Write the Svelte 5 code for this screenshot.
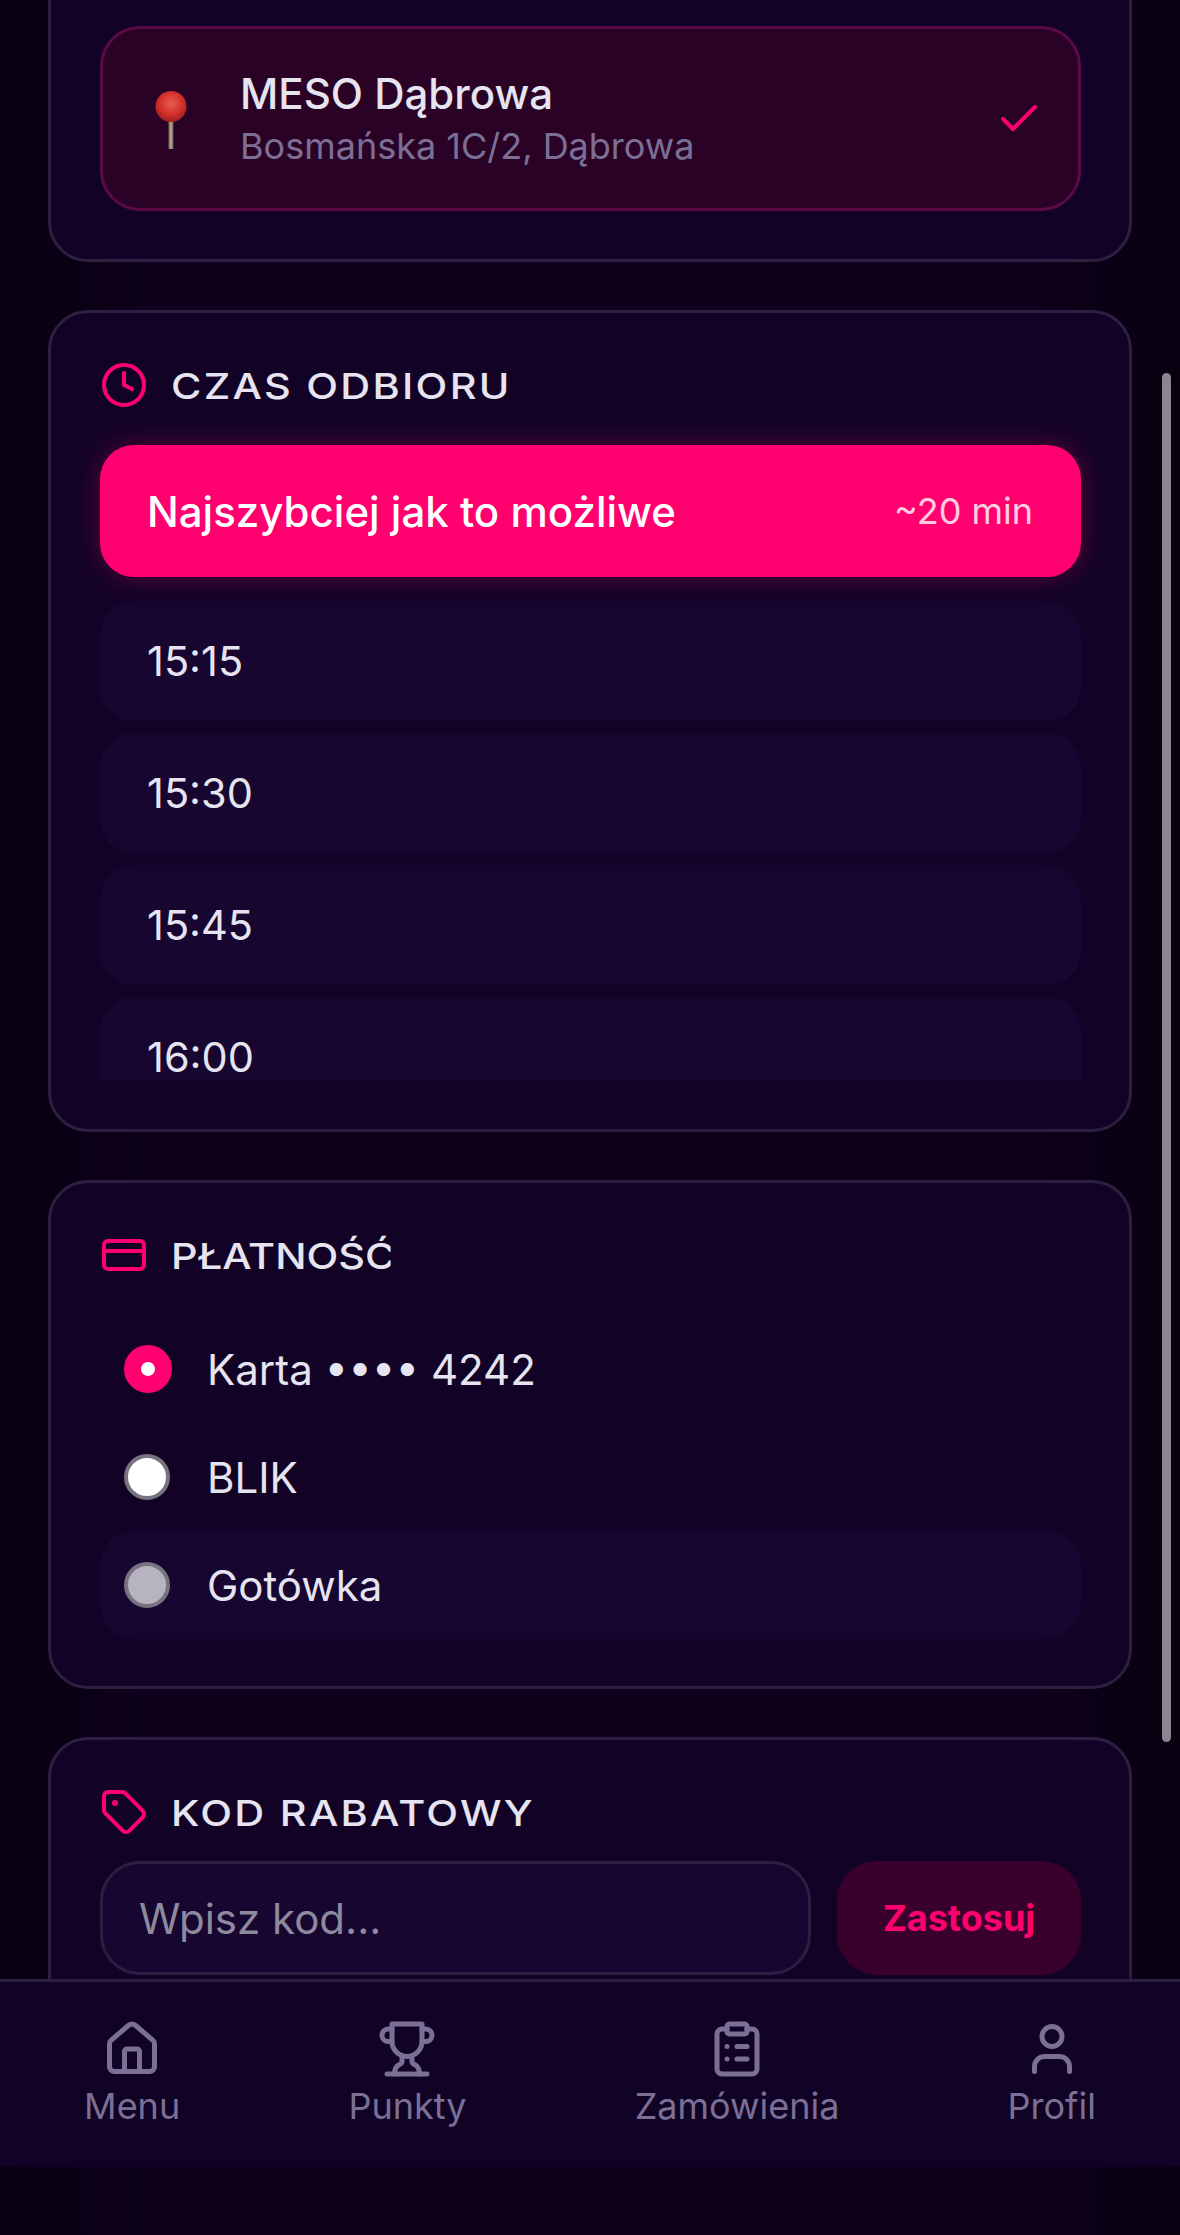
<script>
    let slots = ['15:15', '15:30', '15:45', '16:00']
    let pay = [
        { label: 'Karta •••• 4242', kind: 'on' },
        { label: 'BLIK', kind: 'off' },
        { label: 'Gotówka', kind: 'off disabled' }
    ]
</script>

<div class="screen">
    <main class="scroll">
        <section class="card first">
            <div class="place">
                <svg class="pin" viewBox="0 0 32 58" width="32" height="58">
                    <defs>
                        <radialGradient id="ball" cx="0.5" cy="0.4" r="0.6">
                            <stop offset="0" stop-color="#e8604e" />
                            <stop offset="0.6" stop-color="#d4302a" />
                            <stop offset="1" stop-color="#a01f20" />
                        </radialGradient>
                        <linearGradient id="needle" x1="0" x2="1" y1="0" y2="0">
                            <stop offset="0" stop-color="#6e6450" />
                            <stop offset="0.5" stop-color="#b8ae98" />
                            <stop offset="1" stop-color="#5c5444" />
                        </linearGradient>
                    </defs>
                    <rect x="13.5" y="28" width="5" height="30" fill="url(#needle)" />
                    <circle cx="16" cy="15.500" r="15.500" fill="url(#ball)" />
                </svg>
                <div class="place-text">
                    <div class="place-name">MESO Dąbrowa</div>
                    <div class="place-addr">Bosmańska 1C/2, Dąbrowa</div>
                </div>
                <svg class="check" viewBox="0 0 24 24" width="48" height="48"><path d="M20 6 9 17l-5-5" /></svg>
            </div>
        </section>

        <section class="card">
            <h2>
                <svg class="ico" viewBox="0 0 24 24"><circle cx="12" cy="12" r="10" /><polyline points="12 6 12 12 16 14" /></svg>
                <span class="title">CZAS ODBIORU</span>
            </h2>
            <div class="times">
                <div class="fast">
                    <span>Najszybciej jak to możliwe</span>
                    <small>~20 min</small>
                </div>
                {#each slots as s}
                    <div class="slot">{s}</div>
                {/each}
            </div>
        </section>

        <section class="card">
            <h2>
                <svg class="ico" viewBox="0 0 24 24"><rect width="20" height="14" x="2" y="5" rx="2" /><line x1="2" x2="22" y1="10" y2="10" /></svg>
                <span class="title cut">PŁATNOŚĆ</span>
            </h2>
            <div class="pay">
                {#each pay as p}
                    <div class="pay-row {p.kind}">
                        <span class="radio"></span>
                        <span>{p.label}</span>
                    </div>
                {/each}
            </div>
        </section>

        <section class="card last">
            <h2>
                <svg class="ico" viewBox="0 0 24 24">
                    <path d="M12.586 2.586A2 2 0 0 0 11.172 2H4a2 2 0 0 0-2 2v7.172a2 2 0 0 0 .586 1.414l8.704 8.704a2.426 2.426 0 0 0 3.42 0l6.58-6.58a2.426 2.426 0 0 0 0-3.42z" />
                    <circle cx="7.500" cy="7.500" r=".5" fill="currentColor" />
                </svg>
                <span class="title">KOD RABATOWY</span>
            </h2>
            <div class="promo">
                <input placeholder="Wpisz kod..." />
                <button>Zastosuj</button>
            </div>
        </section>

        <div class="thumb"></div>
    </main>

    <nav>
        <div class="tab">
            <svg viewBox="0 0 24 24"><path d="M15 21v-8a1 1 0 0 0-1-1h-4a1 1 0 0 0-1 1v8" /><path d="M3 10a2 2 0 0 1 .709-1.528l7-5.999a2 2 0 0 1 2.582 0l7 5.999A2 2 0 0 1 21 10v9a2 2 0 0 1-2 2H5a2 2 0 0 1-2-2z" /></svg>
            <span>Menu</span>
        </div>
        <div class="tab">
            <svg viewBox="0 0 24 24"><path d="M6 9H4.500a2.500 2.500 0 0 1 0-5H6" /><path d="M18 9h1.500a2.500 2.500 0 0 0 0-5H18" /><path d="M4 22h16" /><path d="M10 14.660V17c0 .55-.47.98-.97 1.210C7.850 18.750 7 20.240 7 22" /><path d="M14 14.660V17c0 .55.47.98.97 1.210C16.150 18.750 17 20.240 17 22" /><path d="M18 2H6v7a6 6 0 0 0 12 0V2Z" /></svg>
            <span>Punkty</span>
        </div>
        <div class="tab">
            <svg viewBox="0 0 24 24"><rect width="8" height="4" x="8" y="2" rx="1" /><path d="M16 4h2a2 2 0 0 1 2 2v14a2 2 0 0 1-2 2H6a2 2 0 0 1-2-2V6a2 2 0 0 1 2-2h2" /><path d="M12 11h4" /><path d="M12 16h4" /><path d="M8 11h.01" /><path d="M8 16h.01" /></svg>
            <span>Zamówienia</span>
        </div>
        <div class="tab">
            <svg viewBox="0 0 24 24"><path d="M19 21v-2a4 4 0 0 0-4-4H9a4 4 0 0 0-4 4v2" /><circle cx="12" cy="7" r="4" /></svg>
            <span>Profil</span>
        </div>
    </nav>
</div>

<style>
    :global(body) {
        background-color: #0d011b;
        font-family: 'Inter', sans-serif;
        color: #e6e4f0;
    }

    .screen {
        width: 1180px;
        height: 2235px;
        background: linear-gradient(90deg, #08000f 0, #0d011b 12%, #0d011b 88%, #08000f 100%);
        overflow: hidden;
    }

    .scroll {
        position: relative;
        height: 1979px;
        overflow: hidden;
        display: flex;
        flex-direction: column;
        gap: 48px;
        padding: 0 48px;
    }

    .card {
        background-color: #120326;
        border: 3px solid #2c1f42;
        border-radius: 40px;
        padding: 48px 48px 48px 49px;
        flex-shrink: 0;
    }

    .first {
        margin-top: -40px;
        padding-top: 63px;
    }

    .last h2 {
        margin-bottom: 25px;
    }

    .place {
        display: flex;
        align-items: center;
        height: 185px;
        padding: 0 35px 0 52px;
        box-sizing: border-box;
        background-color: #2a0226;
        border: 3px solid #5a0a46;
        border-radius: 40px;
    }

    .pin {
        margin-right: 53px;
        margin-top: 2px;
    }

    .place-text {
        flex: 1;
        padding-top: 2px;
    }

    .place-name {
        font-size: 42px;
        font-weight: 500;
        line-height: 53px;
    }

    .place-addr {
        font-size: 36px;
        line-height: 52px;
        color: #7c6f96;
    }

    .check {
        fill: none;
        stroke: #ff006e;
        stroke-width: 2;
        stroke-linecap: round;
        stroke-linejoin: round;
    }

    h2 {
        display: flex;
        align-items: center;
        gap: 23px;
        height: 48px;
        margin: 0 0 36px;
        font-family: 'Inter', sans-serif;
        font-size: 36px;
        font-weight: 500;
        color: #e6e4f0;
    }

    /* no Orbitron here, so stretch Inter a bit */
    .title {
        display: block;
        margin-top: 2px;
        letter-spacing: 2px;
        white-space: nowrap;
        transform: scaleX(1.15);
        transform-origin: left center;
    }

    /* the heading is clipped inside its box in the app too */
    .cut {
        width: 191px;
        overflow: hidden;
        letter-spacing: 0;
    }

    .ico {
        width: 48px;
        height: 48px;
        fill: none;
        stroke: #ff006e;
        stroke-width: 2;
        stroke-linecap: round;
        stroke-linejoin: round;
        color: #ff006e;
    }

    .times {
        display: flex;
        flex-direction: column;
        height: 636px;
        gap: 12px;
        overflow: hidden;
        margin: -30px -30px 0;
        padding: 30px 30px 0;
        box-sizing: content-box;
    }

    .fast {
        flex-shrink: 0;
        display: flex;
        align-items: center;
        justify-content: space-between;
        height: 132px;
        padding: 0 48px 0 47px;
        margin-bottom: 12px;
        box-sizing: border-box;
        background-color: #ff006e;
        border-radius: 34px;
        box-shadow: 0 0 28px rgba(255, 0, 110, 0.3);
        color: #fff;
        font-size: 42px;
        font-weight: 500;
    }

    .fast small {
        font-size: 36px;
        font-weight: 400;
        opacity: 0.8;
    }

    .slot {
        flex-shrink: 0;
        height: 120px;
        line-height: 120px;
        padding: 0 47px;
        background-color: #170630;
        border-radius: 34px;
        font-size: 41.500px;
    }

    .pay {
        margin-bottom: -1px;
    }

    .pay-row {
        display: flex;
        align-items: center;
        gap: 35px;
        height: 108px;
        padding: 0 24px;
        border-radius: 34px;
        font-size: 42px;
    }

    .pay-row.disabled {
        background-color: #170630;
    }

    .radio {
        width: 46px;
        height: 46px;
        margin-right: 2px;
        box-sizing: border-box;
        border-radius: 50%;
        background-color: #fff;
        border: 4px solid #77737f;
    }

    .disabled .radio {
        background-color: #b8b3c0;
    }

    .on .radio {
        width: 48px;
        height: 48px;
        margin-right: 0;
        border: 17px solid #ff006e;
    }

    .promo {
        display: flex;
        gap: 26px;
    }

    input {
        width: 711px;
        height: 114px;
        box-sizing: border-box;
        padding: 0 36px;
        background-color: #170630;
        border: 3px solid #2c1f42;
        border-radius: 40px;
        font-family: 'Inter', sans-serif;
        font-size: 42px;
        color: #e6e4f0;
        outline: none;
    }

    input::placeholder {
        color: #8e8a9e;
    }

    button {
        width: 244px;
        height: 114px;
        background-color: #3a002c;
        border: none;
        border-radius: 40px;
        font-family: 'Inter', sans-serif;
        font-size: 36px;
        font-weight: 700;
        color: #ff006e;
    }

    .thumb {
        position: absolute;
        left: 1162px;
        top: 373px;
        width: 9px;
        height: 1369px;
        border-radius: 5px;
        background-color: #8a8690;
    }

    nav {
        display: flex;
        justify-content: space-around;
        height: 188px;
        box-sizing: border-box;
        padding-top: 37px;
        background-color: #110325;
        border-top: 3px solid #2c1f42;
    }

    .tab {
        display: flex;
        flex-direction: column;
        align-items: center;
        font-size: 36px;
        color: #7c6f96;
    }

    .tab svg {
        width: 60px;
        height: 60px;
        fill: none;
        stroke: currentColor;
        stroke-width: 2;
        stroke-linecap: round;
        stroke-linejoin: round;
        margin-bottom: 5px;
    }
</style>
